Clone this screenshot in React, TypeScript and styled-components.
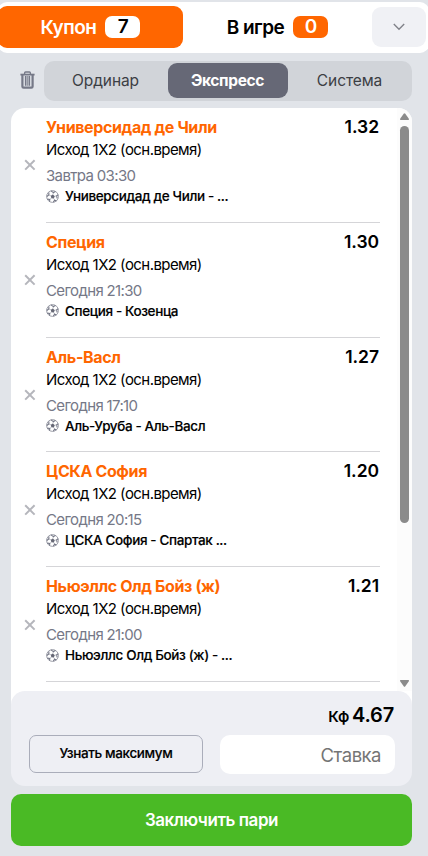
import React from "react";
import styled, { createGlobalStyle } from "styled-components";

const GlobalStyle = createGlobalStyle`
  * { box-sizing: border-box; }
  html, body { margin: 0; padding: 0; }
  body {
    width: 428px;
    height: 856px;
    overflow: hidden;
    background: #e1e4e9;
    color: #000;
    font-family: Inter, "Liberation Sans", sans-serif;
  }
  button, input { font-family: inherit; margin: 0; }
`;

const Page = styled.main`
  display: flex;
  flex-direction: column;
  width: 428px;
  height: 856px;
  padding-top: 2px;
  overflow: hidden;
`;

const Header = styled.header`
  display: flex;
  align-items: center;
  flex: none;
  width: 431px;
  height: 51px;
  margin-left: -2px;
  padding-bottom: 1px;
  background: #fff;
  border-radius: 9px;
`;

const HeaderTab = styled.button<{ $active?: boolean }>`
  display: flex;
  align-items: center;
  justify-content: center;
  gap: 9px;
  width: ${(p) => (p.$active ? 185 : 189)}px;
  height: 42px;
  padding: 0;
  border: 0;
  border-radius: 9px;
  background: ${(p) => (p.$active ? "#ff6600" : "transparent")};
  color: ${(p) => (p.$active ? "#fff" : "#000")};
  font-size: 19px;
  font-weight: 600;
  letter-spacing: -0.5px;
`;

const Count = styled.span<{ $inverse?: boolean }>`
  width: 35px;
  height: 22px;
  border-radius: 7px;
  background: ${(p) => (p.$inverse ? "#fff" : "#ff6600")};
  color: ${(p) => (p.$inverse ? "#000" : "#fff")};
  line-height: 21px;
  text-align: center;
`;

const Collapse = styled.button`
  display: grid;
  place-items: center;
  width: 54px;
  height: 40px;
  padding: 0;
  border: 0;
  border-radius: 9px;
  background: #f0f1f5;
`;

const ModeBar = styled.div`
  display: flex;
  align-items: center;
  flex: none;
  height: 40px;
  margin: 8px 16px 7px 20px;
`;

const Trash = styled.button`
  display: flex;
  width: 24px;
  padding: 0 0 2px;
  border: 0;
  background: none;
`;

const Modes = styled.div`
  display: grid;
  grid-template-columns: 1fr 120px 1fr;
  flex: 1;
  height: 40px;
  padding: 2px 0 3px;
  border-radius: 10px;
  background: #d1d4d9;
`;

const Mode = styled.button<{ $active?: boolean }>`
  padding: 0 1px 0 0;
  border: 0;
  border-radius: 9px;
  background: ${(p) => (p.$active ? "#666876" : "transparent")};
  color: ${(p) => (p.$active ? "#fff" : "#3c3e44")};
  font-size: 15.5px;
  font-weight: ${(p) => (p.$active ? 700 : 400)};
  letter-spacing: ${(p) => (p.$active ? -0.35 : -0.1)}px;
`;

const ListPanel = styled.section`
  display: flex;
  flex: none;
  width: 401px;
  height: 597px;
  margin: 0 0 -14px 11px;
  overflow: hidden;
  border-radius: 14px 14px 0 0;
  background: #fff;
`;

const Bets = styled.ul`
  flex: 1;
  margin: 0;
  padding: 0 17px 0 11px;
  list-style: none;
`;

const Bet = styled.li`
  display: grid;
  grid-template-columns: 24px 1fr;
  height: 114.8px;
`;

const Remove = styled.button`
  display: flex;
  align-items: center;
  width: 16px;
  padding: 0 0 0 2px;
  border: 0;
  background: none;
`;

const BetBody = styled.div`
  padding-top: 8px;
  border-bottom: 1px solid #d5d5d8;
`;

const BetTop = styled.div`
  display: flex;
  justify-content: space-between;
  height: 22px;
  font-size: 16px;
  font-weight: 700;
  letter-spacing: -0.38px;
  line-height: 22px;
`;

const Team = styled.span`
  color: #ff6600;
`;

const Odds = styled.span`
  padding-right: 1px;
  font-size: 17.5px;
  font-weight: 600;
  letter-spacing: -0.05px;
`;

const Outcome = styled.div`
  height: 22px;
  font-size: 15px;
  letter-spacing: -0.57px;
  line-height: 23px;
`;

const Time = styled.div`
  height: 20px;
  margin-top: 6px;
  color: #757887;
  font-size: 15px;
  letter-spacing: -0.65px;
  line-height: 20px;
`;

const Match = styled.div`
  display: flex;
  align-items: center;
  gap: 6px;
  height: 20px;
  font-size: 13.5px;
  font-weight: 500;
  letter-spacing: -0.37px;
  -webkit-text-stroke: 0.15px currentColor;
`;

const ScrollTrack = styled.div`
  display: flex;
  flex-direction: column;
  align-items: center;
  width: 15px;
  height: 583px;
  padding: 5px 0 3px;
  background: #fcfcfc;
`;

const Thumb = styled.div`
  width: 9px;
  height: 397px;
  margin: 5px 0 auto;
  border-radius: 5px;
  background: #8b8b8b;
`;

const Summary = styled.section`
  flex: none;
  position: relative;
  width: 401px;
  height: 95px;
  margin-left: 11px;
  padding: 11px 17px 0 18px;
  border-radius: 14px;
  background: #eeeff4;
`;

const Total = styled.div`
  display: flex;
  justify-content: flex-end;
  align-items: baseline;
  gap: 3px;
  height: 33px;
  padding-right: 1px;
  font-size: 15px;
  font-weight: 600;
  letter-spacing: -0.2px;
  line-height: 26px;
`;

const TotalValue = styled.span`
  font-size: 20px;
`;

const StakeRow = styled.div`
  display: flex;
  justify-content: space-between;
`;

const MaxButton = styled.button`
  width: 174px;
  height: 38px;
  padding: 0 0 2px;
  border: 1px solid #aaadba;
  border-radius: 7px;
  background: transparent;
  color: #000;
  font-size: 13.5px;
  font-weight: 500;
  letter-spacing: -0.37px;
  -webkit-text-stroke: 0.15px currentColor;
`;

const StakeInput = styled.input`
  width: 175px;
  height: 39px;
  padding: 0 14px;
  border: 0;
  border-radius: 10px;
  background: #fff;
  font-size: 18.5px;
  letter-spacing: -0.5px;
  text-align: right;
  &::placeholder { color: #757575; opacity: 1; }
`;

const Submit = styled.button`
  flex: none;
  width: 401px;
  height: 52px;
  margin: 8px 0 0 11px;
  padding: 0 0 1px;
  border: 0;
  border-radius: 10px;
  background: #4aba25;
  color: #fff;
  font-size: 17px;
  font-weight: 600;
  letter-spacing: -0.45px;
`;

const TrashIcon = () => (
  <svg width="15" height="18" viewBox="0 0 15 18" fill="none" stroke="#757887">
    <path d="M.4 3.6h14.2" strokeWidth="1.8" />
    <path d="M4.6 3.2V2q0-1 1-1h3.8q1 0 1 1v1.2" strokeWidth="1.3" />
    <path d="M2.4 4v11.4q0 1.2 1.2 1.2h7.8q1.2 0 1.2-1.2V4" strokeWidth="2.2" />
    <path d="M5.7 5v9.8M9.3 5v9.8" strokeWidth="1.6" />
    <path d="M7.5 5v9.8" strokeWidth=".7" />
  </svg>
);

const CrossIcon = () => (
  <svg width="12" height="12" viewBox="0 0 12 12" stroke="#b5b6bc" strokeWidth="2">
    <path d="m1.2 1.2 9.4 9.4M10.6 1.2l-9.4 9.4" />
  </svg>
);

const BallIcon = () => (
  <svg width="13" height="13" viewBox="0 0 13 13" fill="none" stroke="#757887">
    <circle cx="6.5" cy="6.5" r="5.9" strokeWidth=".7" />
    <path d="m6.9 4.4 1.9 1.8-1 2.3-2.5-.3-.5-2.5z" fill="#666876" stroke="none" />
    <path d="M6.9 4.5 7.4 3M8.7 6.2l2-.3M7.7 8.4l1 1.7M5.4 8.2l-1.7 1.3M4.9 5.8 2.8 4.9" strokeWidth=".5" />
    <path d="m5 .9 2.4 1.7 2-1M12.2 4.8l-1.5 1 .4 2.7M10.5 10.9l-1.8-.7-1.4 1.9M3.6 11.6l.1-2.1-2.4-.4M.8 6.5l2-1.6.1-2.3" strokeWidth="1.1" />
  </svg>
);

const Arrow = ({ down = false }: { down?: boolean }) => (
  <svg width="9" height="8" viewBox="0 0 9 8" fill="#8b8b8b">
    <path
      d={
        down
          ? "M.3 0h8.4q.5.6 0 1.5L5.3 6.2q-.8 1-1.6 0L.3 1.5q-.5-.9 0-1.5z"
          : "M.3 7h8.4q.5-.6 0-1.5L5.3.8q-.8-1-1.6 0L.3 5.5q-.5.9 0 1.5z"
      }
    />
  </svg>
);

const bets = [
  ["Универсидад де Чили", "1.32", "Завтра 03:30", "Универсидад де Чили - ..."],
  ["Специя", "1.30", "Сегодня 21:30", "Специя - Козенца"],
  ["Аль-Васл", "1.27", "Сегодня 17:10", "Аль-Уруба - Аль-Васл"],
  ["ЦСКА София", "1.20", "Сегодня 20:15", "ЦСКА София - Спартак ..."],
  ["Ньюэллс Олд Бойз (ж)", "1.21", "Сегодня 21:00", "Ньюэллс Олд Бойз (ж) - ..."],
];

export default function App() {
  return (
    <>
      <GlobalStyle />
      <Page>
        <Header>
          <HeaderTab $active>Купон <Count $inverse>7</Count></HeaderTab>
          <HeaderTab>В игре <Count>0</Count></HeaderTab>
          <Collapse aria-label="Свернуть">
            <svg width="12" height="8" viewBox="0 0 12 8" fill="none" stroke="#808289" strokeWidth="1.4">
              <path d="m.8 1 5.2 5.2L11.2 1" />
            </svg>
          </Collapse>
        </Header>
        <ModeBar>
          <Trash aria-label="Очистить"><TrashIcon /></Trash>
          <Modes>
            <Mode>Ординар</Mode>
            <Mode $active>Экспресс</Mode>
            <Mode>Система</Mode>
          </Modes>
        </ModeBar>
        <ListPanel>
          <Bets>
            {bets.map(([team, odds, time, match]) => (
              <Bet key={team}>
                <Remove aria-label="Удалить"><CrossIcon /></Remove>
                <BetBody>
                  <BetTop><Team>{team}</Team><Odds>{odds}</Odds></BetTop>
                  <Outcome>Исход 1X2 (осн.время)</Outcome>
                  <Time>{time}</Time>
                  <Match><BallIcon />{match}</Match>
                </BetBody>
              </Bet>
            ))}
          </Bets>
          <ScrollTrack><Arrow /><Thumb /><Arrow down /></ScrollTrack>
        </ListPanel>
        <Summary>
          <Total>Кф <TotalValue>4.67</TotalValue></Total>
          <StakeRow>
            <MaxButton>Узнать максимум</MaxButton>
            <StakeInput placeholder="Ставка" aria-label="Ставка" />
          </StakeRow>
        </Summary>
        <Submit>Заключить пари</Submit>
      </Page>
    </>
  );
}
